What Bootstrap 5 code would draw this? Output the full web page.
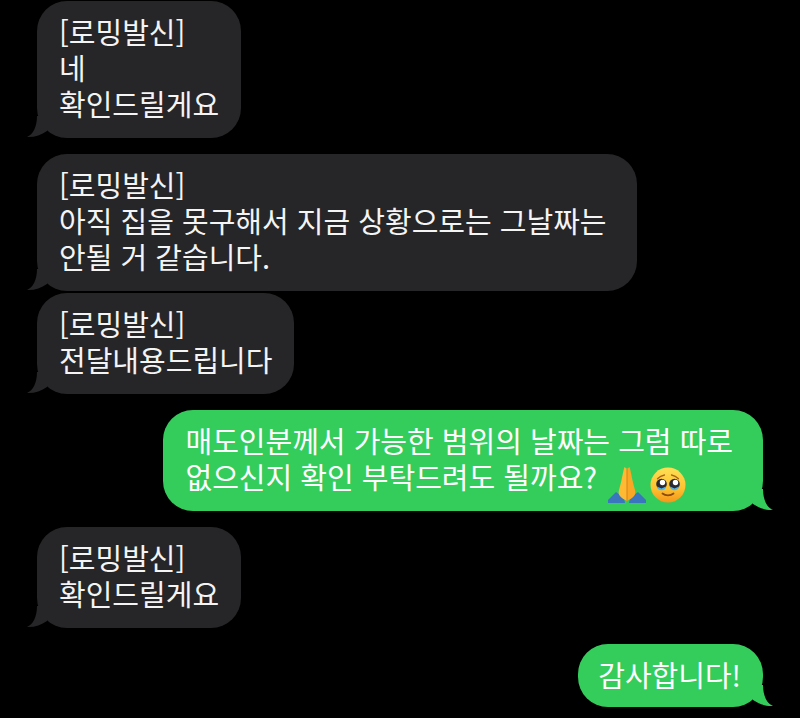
<!DOCTYPE html>
<html lang="ko"><head><meta charset="utf-8">
<link rel="stylesheet" href="https://cdn.jsdelivr.net/npm/bootstrap@5.3.0/dist/css/bootstrap.min.css">
<style>
html,body{background:#000;height:718px;overflow:hidden}
.thread{padding:1px 37px 0 37px;font-family:"Noto Sans CJK KR","Noto Sans",sans-serif;font-size:29px;line-height:36px;letter-spacing:0}
.bub{position:relative;padding:12px 22px 17px 22px;border-radius:30px;white-space:nowrap}
.bub svg.tailmark{position:absolute;bottom:0;width:24px;height:24px}
.inc{background:#262628;color:#f4f4f5;margin-bottom:16px}
.inc svg.tailmark{left:-10px}
.out{background:#34cd5c;color:#fff;margin-bottom:16px}
.out svg.tailmark{right:-10px}
.tight{margin-bottom:2px}
.wrapped{padding-right:30px}
.short{padding:12px 22px 15px 20px}
.emo{display:inline-block;vertical-align:-1px;width:38px;height:38px;margin:-14px 0 -14px 3px}
.emo2{margin-left:3px;margin-right:-1px}
.emo svg{display:block;width:100%;height:100%}
</style></head><body>
<div class="thread d-flex flex-column">
<div class="bub inc align-self-start"><svg class="tailmark" viewBox="0 0 24 24"><path d="M10 2C10 13 6 20.500 0 23C7 23.500 14 21 20 17L20 2Z" fill="#262628"/></svg>[로밍발신]<br>네<br>확인드릴게요</div>
<div class="bub inc align-self-start tight wrapped"><svg class="tailmark" viewBox="0 0 24 24"><path d="M10 2C10 13 6 20.500 0 23C7 23.500 14 21 20 17L20 2Z" fill="#262628"/></svg>[로밍발신]<br>아직 집을 못구해서 지금 상황으로는 그날짜는<br>안될 거 같습니다.</div>
<div class="bub inc align-self-start"><svg class="tailmark" viewBox="0 0 24 24"><path d="M10 2C10 13 6 20.500 0 23C7 23.500 14 21 20 17L20 2Z" fill="#262628"/></svg>[로밍발신]<br>전달내용드립니다</div>
<div class="bub out align-self-end wrapped"><svg class="tailmark" viewBox="0 0 24 24"><path d="M14 2C14 13 18 20.500 24 23C17 23.500 10 21 4 17L4 2Z" fill="#34cd5c"/></svg>매도인분께서 가능한 범위의 날짜는 그럼 따로<br>없으신지 확인 부탁드려도 될까요? <span class="emo"><svg viewBox="0 0 38 38"><path d="M0 37V34L8 26 16 32 17 37Z" fill="#3a76bd"/><path d="M38 37V34L30 26 22 32 21 37Z" fill="#3a76bd"/><path d="M16.500 1C15 5 14 14 11 24C9.500 29 13 32 19 35V3Z" fill="#fdba32"/><path d="M21.500 1C23 5 24 14 27 24C28.500 29 25 32 19 35V3Z" fill="#f9a724"/><path d="M19 3V35" stroke="#d9811a" stroke-width="1"/></svg></span><span class="emo emo2"><svg viewBox="0 0 38 38"><defs><linearGradient id="f" x1="0" y1="0" x2="0" y2="1"><stop offset="0" stop-color="#ffdf55"/><stop offset=".6" stop-color="#fdc230"/><stop offset="1" stop-color="#f6951c"/></linearGradient></defs><circle cx="19" cy="19" r="17.500" fill="url(#f)"/><circle cx="12.500" cy="18" r="5.300" fill="#2b2a33"/><circle cx="25.500" cy="18" r="5.300" fill="#2b2a33"/><circle cx="13.500" cy="16.500" r="2.700" fill="#fff"/><circle cx="26.500" cy="16.500" r="2.700" fill="#fff"/><path d="M8 20.500a4.500 3.800 0 0 0 9 0l-4.500 2Z" fill="#4fb4e8"/><path d="M21 20.500a4.500 3.800 0 0 0 9 0l-4.500 2Z" fill="#4fb4e8"/><path d="M13.500 27.500c3 2.500 8 2.500 11 0" fill="none" stroke="#8a4a10" stroke-width="1.800" stroke-linecap="round"/><path d="M8.500 12.700c2-2 4.500-3.200 7-3.700M29.500 12.700c-2-2-4.500-3.200-7-3.700" fill="none" stroke="#a8621a" stroke-width="1.300" stroke-linecap="round"/></svg></span></div>
<div class="bub inc align-self-start"><svg class="tailmark" viewBox="0 0 24 24"><path d="M10 2C10 13 6 20.500 0 23C7 23.500 14 21 20 17L20 2Z" fill="#262628"/></svg>[로밍발신]<br>확인드릴게요</div>
<div class="bub out align-self-end short"><svg class="tailmark" viewBox="0 0 24 24"><path d="M14 2C14 13 18 20.500 24 23C17 23.500 10 21 4 17L4 2Z" fill="#34cd5c"/></svg>감사합니다!</div>
</div>
<script src="https://cdn.jsdelivr.net/npm/bootstrap@5.3.0/dist/js/bootstrap.bundle.min.js"></script>
</body></html>
